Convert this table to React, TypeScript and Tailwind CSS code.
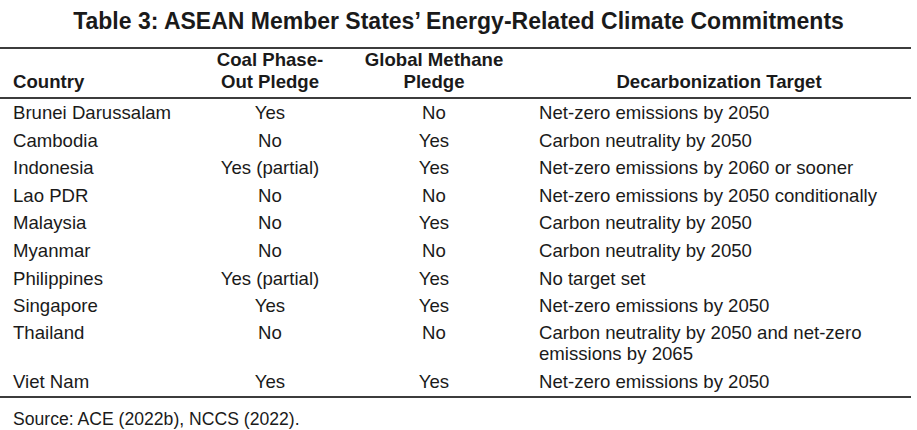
const ROWS: { country: string; coal: string; methane: string; target: React.ReactNode; tall?: boolean }[] = [
  { country: "Brunei Darussalam", coal: "Yes", methane: "No", target: "Net-zero emissions by 2050" },
  { country: "Cambodia", coal: "No", methane: "Yes", target: "Carbon neutrality by 2050" },
  { country: "Indonesia", coal: "Yes (partial)", methane: "Yes", target: "Net-zero emissions by 2060 or sooner" },
  { country: "Lao PDR", coal: "No", methane: "No", target: "Net-zero emissions by 2050 conditionally" },
  { country: "Malaysia", coal: "No", methane: "Yes", target: "Carbon neutrality by 2050" },
  { country: "Myanmar", coal: "No", methane: "No", target: "Carbon neutrality by 2050" },
  { country: "Philippines", coal: "Yes (partial)", methane: "Yes", target: "No target set" },
  { country: "Singapore", coal: "Yes", methane: "Yes", target: "Net-zero emissions by 2050" },
  {
    country: "Thailand",
    coal: "No",
    methane: "No",
    target: (
      <>
        Carbon neutrality by 2050 and net-zero
        <br />
        emissions by 2065
      </>
    ),
    tall: true,
  },
  { country: "Viet Nam", coal: "Yes", methane: "Yes", target: "Net-zero emissions by 2050" },
];

const COLS = "grid grid-cols-[200px_140px_188px_382px]";

export default function App() {
  return (
    <div className="h-[430px] w-[917px] overflow-hidden bg-white font-['Liberation_Sans',Arial,sans-serif] text-[#1a1a1a]">
      <h1 className="flex h-[47px] items-center justify-center pb-[5px] text-[23px] font-bold">
        Table 3: ASEAN Member States’ Energy-Related Climate Commitments
      </h1>

      <div className="w-[911px] border-y-2 border-[#3c3c3c]">
        {/* header */}
        <div className={`${COLS} h-[50px] border-b-2 border-[#3c3c3c] pb-[4px] text-[18.6px] font-bold leading-[22px]`}>
          <div className="flex items-end pl-[13px]">Country</div>
          <div className="flex items-end justify-center text-center">
            Coal Phase-
            <br />
            Out Pledge
          </div>
          <div className="flex items-end justify-center text-center">
            Global Methane
            <br />
            Pledge
          </div>
          <div className="flex items-end justify-center">Decarbonization Target</div>
        </div>

        {/* body */}
        {ROWS.map((r) => (
          <div
            key={r.country}
            className={`${COLS} whitespace-nowrap text-[18.6px] ${
              r.tall ? "h-[48.4px] pt-[2.5px] leading-[21px]" : "h-[27.6px] leading-[27.6px]"
            }`}
          >
            <div className="pl-[13px]">{r.country}</div>
            <div className="text-center">{r.coal}</div>
            <div className="text-center">{r.methane}</div>
            <div className="pl-[11px]">{r.target}</div>
          </div>
        ))}
      </div>

      <p className="mt-[11px] pl-[13px] text-[17.6px] leading-[20px]">Source: ACE (2022b), NCCS (2022).</p>
    </div>
  );
}
